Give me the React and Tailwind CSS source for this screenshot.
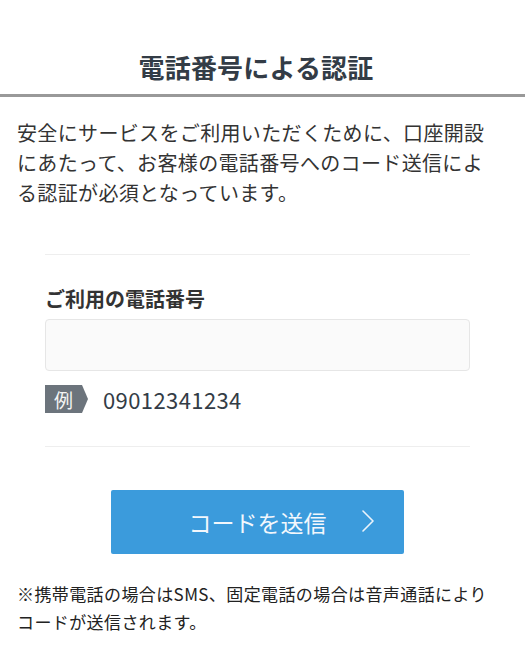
const font = { fontFamily: '"Noto Sans CJK JP", "Noto Sans", sans-serif' }

export default function App() {
  return (
    <div className="w-[525px] min-h-[670px] bg-white text-[#333]" style={font}>
      {/* Header */}
      <header className="h-[97px] pt-[40px] border-b-[3px] border-[#999]">
        <div className="w-[512px] h-full flex items-center justify-center">
          <h1 className="text-[26px] leading-none font-bold tracking-[0.2px] text-[#333c46]">電話番号による認証</h1>
        </div>
      </header>

      {/* Intro */}
      <p className="mt-[21px] pl-[17px] pr-[28px] text-[20px] leading-[30px] tracking-[0.35px]">
        安全にサービスをご利用いただくために、口座開設にあたって、お客様の電話番号へのコード送信による認証が必須となっています。
      </p>

      {/* Form */}
      <section className="ml-[45px] w-[425px] mt-[46px]">
        <div className="border-t border-[#eee]" />
        <label className="block mt-[29px] text-[20px] leading-[30px] font-bold text-[#333]">ご利用の電話番号</label>
        <input
          type="tel"
          className="mt-[5px] block w-full h-[52px] bg-[#fafafa] border border-[#e6e6e6] rounded-[4px] px-3 text-[20px] outline-none"
        />
        <div className="mt-[14px] flex items-center">
          <span className="flex items-center">
            <span className="w-[37px] h-[28px] bg-[#6c747c] text-[#f4f4f4] text-[19px] leading-none flex items-center justify-center">例</span>
            <span className="w-0 h-0 border-y-[14px] border-y-transparent border-l-[6px] border-l-[#6c747c]" />
          </span>
          <span className="ml-[15px] text-[22px] leading-none tracking-[0.4px] text-[#333c46]">09012341234</span>
        </div>
        <div className="mt-[33px] border-t border-[#eee]" />

        <div className="mt-[43px] flex justify-center">
          <button className="relative w-[293px] h-[64px] bg-[#3b9bdc] rounded-[2px] text-[#f2f7fc] text-[23px] flex items-center justify-center">
            コードを送信
            <svg width="12" height="22" viewBox="0 0 12 22" className="absolute right-[30px] top-[20px]">
              <polyline points="1,1 11,11 1,21" fill="none" stroke="#eaf3fb" strokeWidth="1.6" strokeLinecap="round" strokeLinejoin="round" />
            </svg>
          </button>
        </div>
      </section>

      {/* Note */}
      <p className="mt-[26px] pl-[17px] pr-[24px] text-[17px] leading-[28px] tracking-[0.4px] text-[#222]">
        ※携帯電話の場合はSMS、固定電話の場合は音声通話によりコードが送信されます。
      </p>
    </div>
  )
}
